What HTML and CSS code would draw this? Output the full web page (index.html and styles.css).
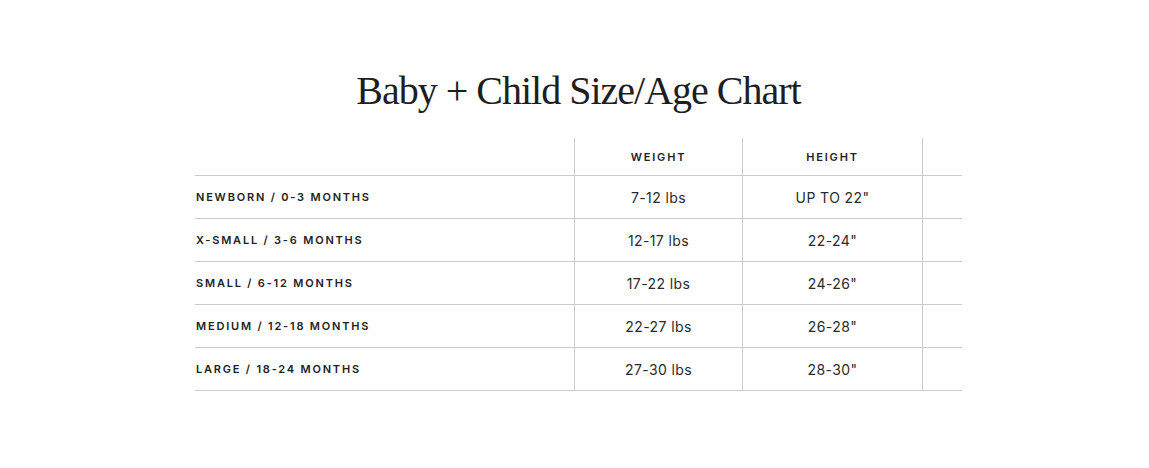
FILE: index.html
```html
<!DOCTYPE html>
<html lang="en">
<head>
<meta charset="utf-8">
<title>Baby + Child Size/Age Chart</title>
<link rel="stylesheet" href="styles.css">
</head>
<body>
<main class="chart">
  <h1 class="chart-title">Baby + Child Size/Age Chart</h1>
  <table class="size-table">
    <thead>
      <tr>
        <th class="col-size"></th>
        <th class="col-val">WEIGHT</th>
        <th class="col-val col-h">HEIGHT</th>
        <th class="col-empty"></th>
      </tr>
    </thead>
    <tbody>
      <tr><td class="label">NEWBORN / 0-3 MONTHS</td><td class="val">7-12 lbs</td><td class="val">UP TO 22"</td><td class="empty"></td></tr>
      <tr><td class="label">X-SMALL / 3-6 MONTHS</td><td class="val">12-17 lbs</td><td class="val">22-24"</td><td class="empty"></td></tr>
      <tr><td class="label">SMALL / 6-12 MONTHS</td><td class="val">17-22 lbs</td><td class="val">24-26"</td><td class="empty"></td></tr>
      <tr><td class="label">MEDIUM / 12-18 MONTHS</td><td class="val">22-27 lbs</td><td class="val">26-28"</td><td class="empty"></td></tr>
      <tr><td class="label">LARGE / 18-24 MONTHS</td><td class="val">27-30 lbs</td><td class="val">28-30"</td><td class="empty"></td></tr>
    </tbody>
  </table>
</main>
</body>
</html>
```

FILE: styles.css
```css
html, body {
  margin: 0;
  background: #ffffff;
}
body {
  padding: 0 0 0 8px;
  font-family: Inter, "Liberation Sans", sans-serif;
  color: #222222;
}
.chart {
  width: 767px;
  margin: 0 auto;
}
.chart-title {
  margin: 0;
  padding-top: 67px;
  height: 71px;
  box-sizing: content-box;
  font-family: "Liberation Serif", serif;
  font-weight: 400;
  font-size: 40px;
  letter-spacing: -1px;
  line-height: 48px;
  text-align: center;
  color: #1e1e1e;
}
.size-table {
  width: 764px;
  border-collapse: collapse;
  table-layout: fixed;
}
.col-size { width: 379px; }
.col-val { width: 167px; }
.col-h { width: 179px; }
.col-empty { width: 39px; }
th {
  height: 37px;
  padding: 0;
  font-size: 11px;
  font-weight: 600;
  letter-spacing: 1.8px;
  text-align: center;
  border-bottom: 1px solid #c9cbcd;
}
td {
  height: 42px;
  padding: 0;
  border-bottom: 1px solid #c9cbcd;
}
th + th, td + td {
  border-left: 1px solid #c9cbcd;
}
.label {
  font-size: 11px;
  font-weight: 600;
  letter-spacing: 1.8px;
  padding-left: 1px;
}
.val {
  text-align: center;
  font-size: 14px;
  font-weight: 400;
  letter-spacing: 0.4px;
  color: #2a2a2a;
}
```
